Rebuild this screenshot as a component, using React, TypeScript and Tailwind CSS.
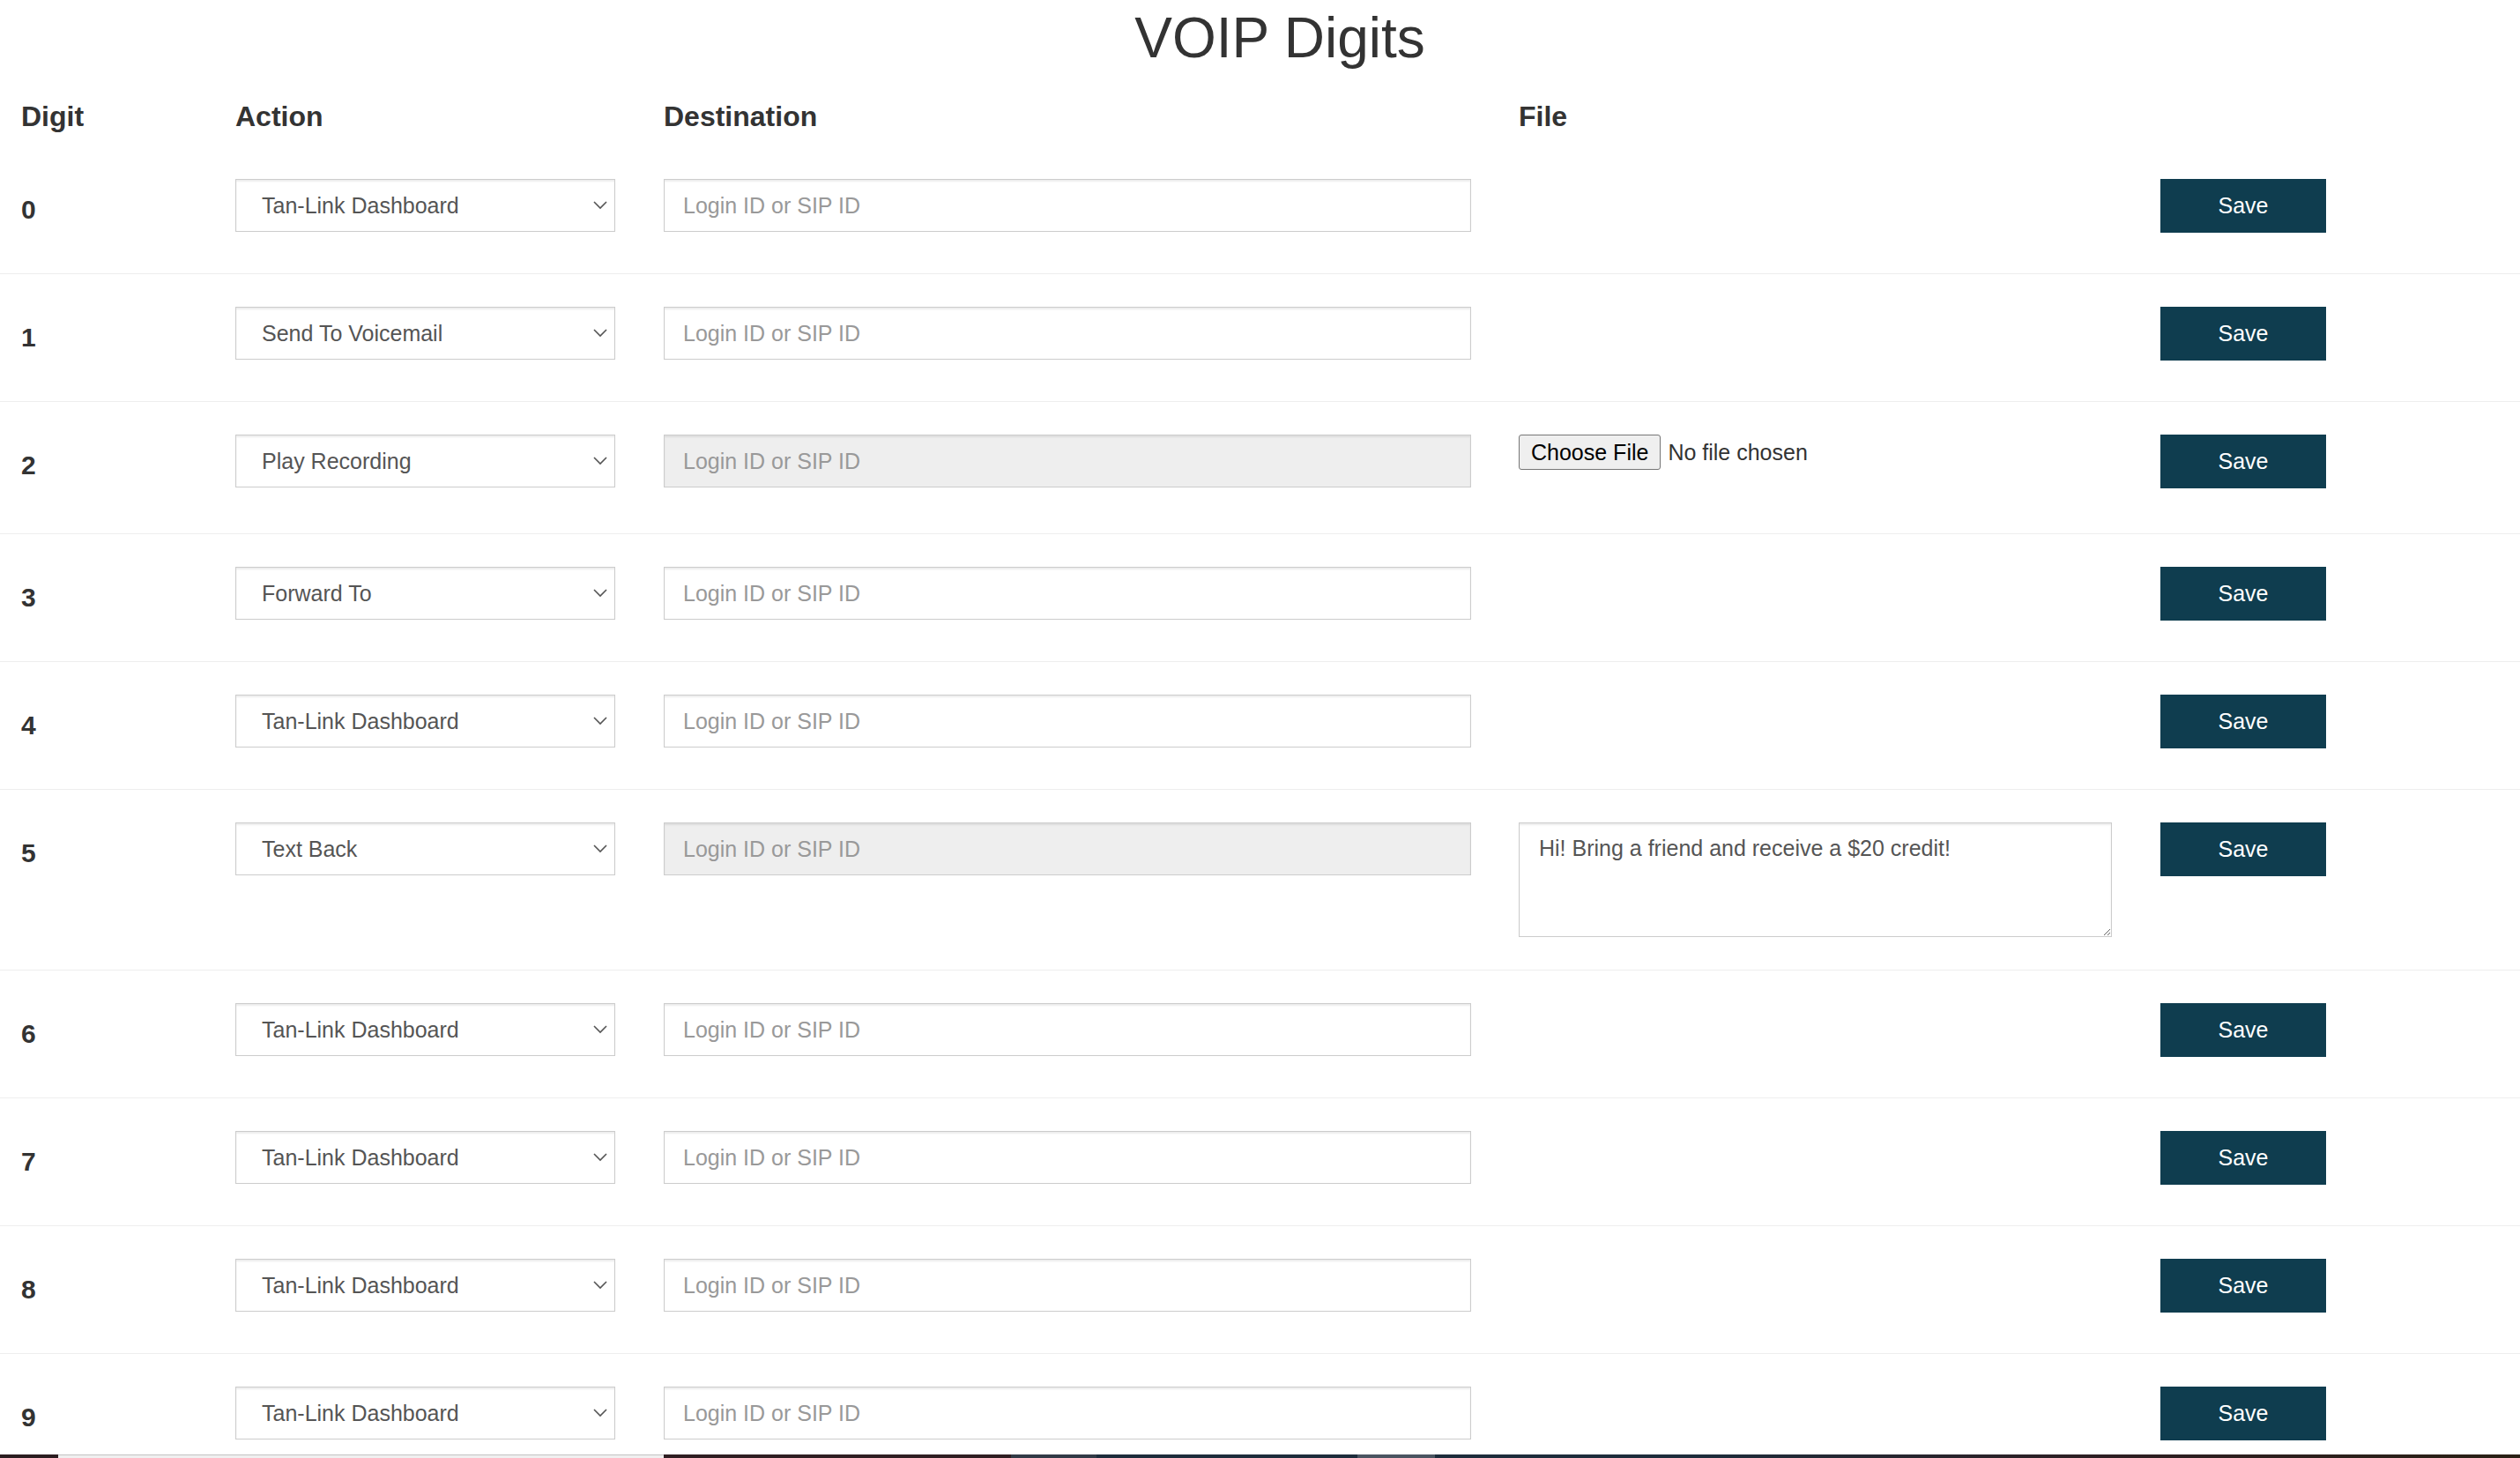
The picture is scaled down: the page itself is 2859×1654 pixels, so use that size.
import React from 'react';

type Row = {
  digit: number;
  action: string;
  disabled?: boolean;
  extra?: 'file' | 'text';
};

const actions = ['Tan-Link Dashboard', 'Send To Voicemail', 'Play Recording', 'Forward To', 'Text Back'];

const rows: Row[] = [
  { digit: 0, action: 'Tan-Link Dashboard' },
  { digit: 1, action: 'Send To Voicemail' },
  { digit: 2, action: 'Play Recording', disabled: true, extra: 'file' },
  { digit: 3, action: 'Forward To' },
  { digit: 4, action: 'Tan-Link Dashboard' },
  { digit: 5, action: 'Text Back', disabled: true, extra: 'text' },
  { digit: 6, action: 'Tan-Link Dashboard' },
  { digit: 7, action: 'Tan-Link Dashboard' },
  { digit: 8, action: 'Tan-Link Dashboard' },
  { digit: 9, action: 'Tan-Link Dashboard' },
];

const cols = 'grid grid-cols-[243px_486px_970px_728px_1fr] px-[24px]';

const ActionSelect = ({ value }: { value: string }) => (
  <div className="relative w-[431px] h-[60px] mb-[10px]">
    <select
      defaultValue={value}
      className="appearance-none w-full h-full border border-[#ccc] bg-white pl-[29px] pr-[40px] pt-[2px] text-[25px] text-[#555] shadow-[inset_0_2px_2px_rgba(0,0,0,0.075)] outline-none"
    >
      {actions.map((a) => (
        <option key={a} value={a}>
          {a}
        </option>
      ))}
    </select>
    {/* chevron */}
    <svg
      className="absolute right-[9px] top-[25px] w-[16px] h-[10px] pointer-events-none"
      viewBox="0 0 16 10"
      fill="none"
      stroke="#555"
      strokeWidth={1.6}
    >
      <path d="M1 1l7 7 7-7" />
    </svg>
  </div>
);

const DigitRow = ({ row }: { row: Row }) => (
  <div className={`${cols} items-start pt-[37px] pb-[37px] border-b border-[#eee]`}>
    <div className="pt-[20px] text-[30px] font-bold leading-none text-[#333]">{row.digit}</div>

    <div>
      <ActionSelect value={row.action} />
    </div>

    <div>
      <input
        type="text"
        placeholder="Login ID or SIP ID"
        disabled={row.disabled}
        className={`w-[916px] h-[60px] mb-[10px] border border-[#ccc] px-[21px] text-[25px] text-[#555] placeholder:text-[#999] shadow-[inset_0_2px_2px_rgba(0,0,0,0.075)] outline-none ${
          row.disabled ? 'bg-[#eee]' : 'bg-white'
        }`}
      />
    </div>

    <div>
      {row.extra === 'file' && (
        <div className="flex items-start h-[75px]">
          <button className="h-[40px] px-[13px] border border-[#767676] rounded-[3px] bg-[#efefef] text-[25px] leading-none text-black">
            Choose File
          </button>
          <span className="ml-[8px] leading-[40px] text-[25px] text-[#333]">No file chosen</span>
        </div>
      )}
      {row.extra === 'text' && (
        <textarea
          defaultValue="Hi! Bring a friend and receive a $20 credit!"
          className="block w-[673px] h-[130px] border border-[#ccc] px-[22px] py-[11px] text-[25px] leading-[1.43] text-[#555] resize-y shadow-[inset_0_2px_2px_rgba(0,0,0,0.075)] outline-none"
        />
      )}
    </div>

    <div>
      <button className="w-[188px] h-[61px] bg-[#0f3d4f] text-white text-[25px] leading-none">Save</button>
    </div>
  </div>
);

export default function App() {
  return (
    <div className="h-[1654px] flex flex-col overflow-hidden bg-white font-['Liberation_Sans',Arial,sans-serif] text-[#333]">
      <main className="flex-1 min-h-0 overflow-hidden">
        {/* Title */}
        <div className="h-[90px] pt-[11px] pl-[45px] text-center">
          <h1 className="text-[64px] leading-none font-normal text-[#333]">VOIP Digits</h1>
        </div>

        {/* Column headers */}
        <div className={`${cols} pt-[26px] pb-[18px] text-[32px] font-bold leading-none text-[#333]`}>
          <div>Digit</div>
          <div>Action</div>
          <div>Destination</div>
          <div>File</div>
          <div />
        </div>

        {rows.map((row) => (
          <DigitRow key={row.digit} row={row} />
        ))}
      </main>

      {/* Bottom strip */}
      <div className="h-[4px] flex shrink-0">
        <div className="w-[66px] bg-[#2b1d20]" />
        <div className="w-[687px] bg-[#f0f0f0] border-t border-[#c3c3c3]" />
        <div className="w-[394px] bg-[#2f1e22]" />
        <div className="w-[97px] bg-[#323a46]" />
        <div className="w-[296px] bg-[#1d2c3b]" />
        <div className="w-[88px] bg-[#4b5561]" />
        <div className="w-[303px] bg-[#1d2c3b]" />
        <div className="flex-1 bg-linear-to-r from-[#1d2c3b] via-[#2e1e22] to-[#2a2015]" />
      </div>
    </div>
  );
}
